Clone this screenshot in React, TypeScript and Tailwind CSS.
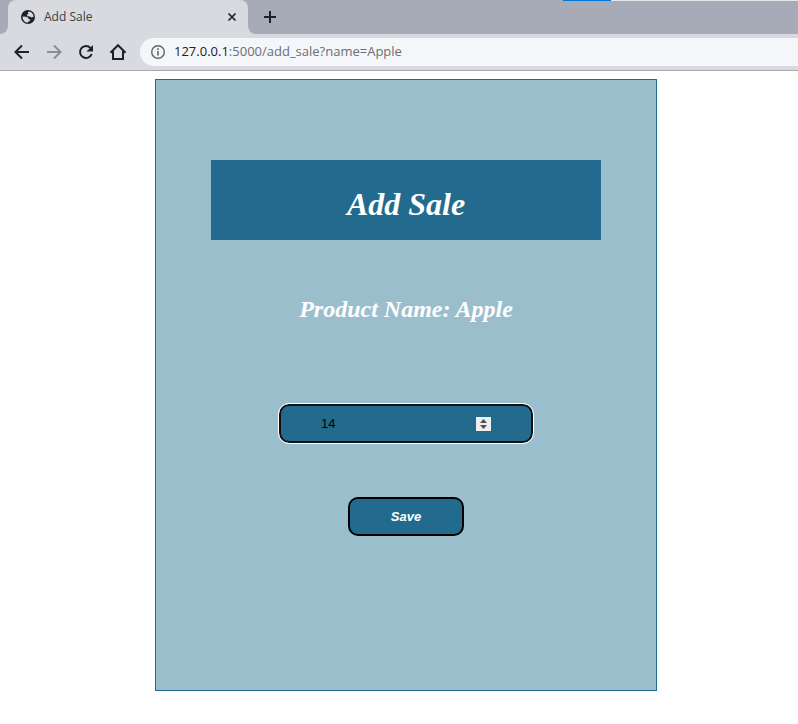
import { useState } from "react";

const iconButton = "flex h-8 w-8 items-center justify-center";

function GlobeIcon() {
  return (
    <svg width="16" height="16" viewBox="0 0 16 16" aria-hidden="true">
      <circle cx="8" cy="8" r="7" fill="#202124" />
      <path d="M2.600 7.500l3.400.2 2.200 1 .3 1.300 1.800.5-.3 1.500-1.700.4-.4 1.400C5 13.600 2.300 11.200 2.600 7.500z" fill="#d9dadf" />
      <path d="M8.800 2.400c2.800.3 4.800 2.500 4.800 5.400l-2 .7-1.900-.9-2.300-.3-.5-1.500 1.500-.9-.6-1.200z" fill="#d9dadf" />
    </svg>
  );
}

function TabStrip() {
  return (
    <div className="relative flex h-[34px] bg-[#a7abb8]">
      <div className="absolute top-0 right-0 left-[563px] flex h-px bg-[#e6e6e6]">
        <div className="w-12 bg-[#0078d7]" />
      </div>
      <div className="relative ml-2 flex h-full w-60 items-center rounded-t-lg bg-[#d9dadf] pr-2 pl-3">
        <svg className="absolute bottom-0 -left-2" width="8" height="8" aria-hidden="true">
          <path d="M8 0v8H0a8 8 0 0 0 8-8" fill="#d9dadf" />
        </svg>
        <svg className="absolute -right-2 bottom-0" width="8" height="8" aria-hidden="true">
          <path d="M0 0v8h8a8 8 0 0 1-8-8" fill="#d9dadf" />
        </svg>
        <GlobeIcon />
        <span className="ml-2 flex-1 text-xs text-[#3c3f45]">Add Sale</span>
        <button aria-label="Close tab" className="flex h-4 w-4 items-center justify-center">
          <svg width="16" height="16" viewBox="0 0 16 16" aria-hidden="true">
            <path d="M4.500 4.500l7 7m0-7l-7 7" stroke="#202124" strokeWidth="1.700" />
          </svg>
        </button>
      </div>
      <button aria-label="New tab" className="ml-2 flex h-full w-7 items-center justify-center">
        <svg width="14" height="14" viewBox="0 0 14 14" aria-hidden="true">
          <path d="M7 1v12M1 7h12" stroke="#202124" strokeWidth="2" />
        </svg>
      </button>
    </div>
  );
}

function Toolbar() {
  return (
    <div className="flex h-[37px] items-center border-b border-[#a9abb3] bg-[#d9dadf] pl-[6px]">
      <button aria-label="Back" className={iconButton}>
        <svg width="16" height="16" viewBox="0 0 16 16" fill="none" stroke="#202124" strokeWidth="2" aria-hidden="true">
          <path d="M15 8H2.500M8 1.500L1.500 8 8 14.500" />
        </svg>
      </button>
      <button aria-label="Forward" className={iconButton}>
        <svg width="16" height="16" viewBox="0 0 16 16" fill="none" stroke="#8b8d92" strokeWidth="2" aria-hidden="true">
          <path d="M1 8h12.500M8 1.500L14.500 8 8 14.500" />
        </svg>
      </button>
      <button aria-label="Reload" className={iconButton}>
        <svg width="16" height="16" viewBox="0 0 16 16" aria-hidden="true">
          <path d="M12.600 4.100A6 6 0 1 0 13.700 10" fill="none" stroke="#202124" strokeWidth="2" />
          <path d="M15 1v6.500H8.500z" fill="#202124" />
        </svg>
      </button>
      <button aria-label="Home" className={iconButton}>
        <svg width="18" height="18" viewBox="0 0 18 18" fill="none" stroke="#202124" strokeWidth="2" aria-hidden="true">
          <path d="M1.500 9.700L9 2.200l7.500 7.500M4 8v8h10V8" />
        </svg>
      </button>
      <div className="ml-[6px] flex h-7 flex-1 items-center rounded-l-full bg-[#f5f6f9] pl-[10px]">
        <svg width="16" height="16" viewBox="0 0 16 16" aria-hidden="true">
          <circle cx="8" cy="8" r="6.300" fill="none" stroke="#5f6368" strokeWidth="1.400" />
          <path d="M8 7v4.500M8 4.300v1.700" stroke="#5f6368" strokeWidth="1.600" />
        </svg>
        <span className="ml-2 text-[13px] text-[#6b6e73]">
          <span className="text-[#202124]">127.0.0.1</span>:5000/add_sale?name=Apple
        </span>
      </div>
    </div>
  );
}

function QuantityField({ value, onChange }: { value: number; onChange: (value: number) => void }) {
  return (
    <div className="mt-[82px] flex h-[39px] w-[254px] items-center rounded-[10px] border-2 border-[#101010] bg-[#236b8e] px-10 outline outline-white">
      <input
        type="number"
        aria-label="Quantity"
        value={value}
        onChange={(event) => onChange(Number(event.target.value))}
        className="w-full min-w-0 flex-1 appearance-none bg-transparent text-[13px] text-black outline-none [-moz-appearance:textfield] [&::-webkit-inner-spin-button]:appearance-none"
      />
      <div className="flex h-[14px] w-[15px] flex-col bg-[#efefef]">
        <button type="button" aria-label="Increase" onClick={() => onChange(value + 1)} className="flex flex-1 items-end justify-center pb-px">
          <svg width="7" height="4" aria-hidden="true"><path d="M0 4L3.500 0 7 4z" fill="#505050" /></svg>
        </button>
        <button type="button" aria-label="Decrease" onClick={() => onChange(value - 1)} className="flex flex-1 items-start justify-center pt-px">
          <svg width="7" height="4" aria-hidden="true"><path d="M0 0h7L3.500 4z" fill="#505050" /></svg>
        </button>
      </div>
    </div>
  );
}

export default function App() {
  const [quantity, setQuantity] = useState(14);

  return (
    <div className="min-h-screen bg-white">
      <header className="font-['Open_Sans',sans-serif]">
        <TabStrip />
        <Toolbar />
      </header>
      <main className="py-2 pl-[14px] font-['Liberation_Sans',Arial,sans-serif]">
        <form
          onSubmit={(event) => event.preventDefault()}
          className="mx-auto flex w-full max-w-[502px] flex-col items-center border border-[#236b8e] bg-[#9bbecd] px-[55px] pt-20 pb-[154px]"
        >
          <h1 className="w-full bg-[#236b8e] pt-[26px] pb-[18px] text-center font-['Liberation_Serif','Times_New_Roman',serif] text-[32px] leading-9 font-bold text-white italic">
            Add Sale
          </h1>
          <h2 className="mt-14 text-center font-['Liberation_Serif','Times_New_Roman',serif] text-2xl leading-[26px] font-bold text-white italic">
            Product Name: Apple
          </h2>
          <QuantityField value={quantity} onChange={setQuantity} />
          <button className="mt-[54px] h-[39px] w-[116px] rounded-[10px] border-2 border-black bg-[#236b8e] text-[13px] font-bold text-white italic">
            Save
          </button>
        </form>
      </main>
    </div>
  );
}
